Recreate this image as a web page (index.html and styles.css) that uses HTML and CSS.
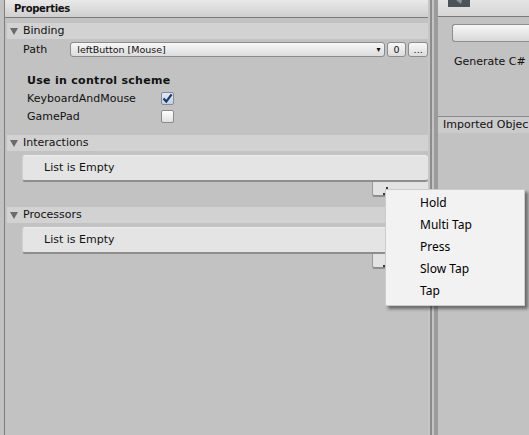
FILE: index.html
```html
<!DOCTYPE html>
<html>
<head>
<meta charset="utf-8">
<link rel="stylesheet" href="styles.css">
</head>
<body>
<div class="root">
  <div class="left">
    <div class="titlebar"><span class="title">Properties</span></div>
    <div class="section">
      <div class="sechead"><span class="tri"></span>Binding</div>
      <div class="pathrow">
        <span class="plabel">Path</span>
        <div class="dropdown"><span>leftButton [Mouse]</span><span class="arrow">&#9662;</span></div>
        <div class="smallbtn zero">0</div>
        <div class="smallbtn dots">...</div>
      </div>
      <div class="row bold">Use in control scheme</div>
      <div class="row"><span class="rlabel">KeyboardAndMouse</span>
        <span class="check on"><svg width="11" height="11" viewBox="0 0 11 11"><path d="M1.5 5.5 L4.3 8.6 L9.6 1.4" fill="none" stroke="#173a6e" stroke-width="2.2"/></svg></span>
      </div>
      <div class="row"><span class="rlabel">GamePad</span><span class="check"></span></div>
    </div>
    <div class="section sec2">
      <div class="sechead"><span class="tri"></span>Interactions</div>
      <div class="listbox">List is Empty</div>
      <div class="footer"><span class="plus"></span></div>
    </div>
    <div class="section sec3">
      <div class="sechead"><span class="tri"></span>Processors</div>
      <div class="listbox">List is Empty</div>
      <div class="footer"><span class="plus"></span></div>
    </div>
  </div>
  <div class="sep"><span class="s1"></span><span class="s2"></span><span class="s3"></span></div>
  <div class="right">
    <div class="rtop"><span class="icon"><svg width="22" height="7" viewBox="0 0 22 7"><path d="M8 0 L14 0 L13 4 Z" fill="#8b939a"/></svg></span></div>
    <div class="rbody">
      <div class="bigbtn"></div>
      <div class="gen">Generate C#</div>
    </div>
    <div class="imported">Imported Objec</div>
  </div>
</div>
<div class="menu">
  <div class="item">Hold</div>
  <div class="item">Multi Tap</div>
  <div class="item">Press</div>
  <div class="item">Slow Tap</div>
  <div class="item">Tap</div>
</div>
</body>
</html>
```
FILE: styles.css
```css
html, body {
  margin: 0;
  padding: 0;
  background: #c2c2c2;
  width: 529px;
  height: 435px;
  overflow: hidden;
  font-family: "DejaVu Sans", sans-serif;
  font-size: 11px;
  color: #111;
}
.root {
  display: flex;
  height: 435px;
}
.left {
  width: 423px;
  margin-left: 4px;
  border-left: 1px solid #7d7d7d;
  display: flex;
  flex-direction: column;
}
.titlebar {
  height: 17px;
  border-bottom: 1px solid #7a7a7a;
  background: linear-gradient(#e9e9e9, #cfcfcf);
  display: flex;
  align-items: center;
}
.title {
  font-weight: bold;
  font-size: 10px;
  margin-left: 9px;
  letter-spacing: -0.3px;
}
.section {
  margin-top: 5px;
  display: flex;
  flex-direction: column;
}
.sec2, .sec3 { margin-top: 10px; }
.sechead {
  height: 16px;
  margin-left: 2px;
  background: #d2d2d2;
  display: flex;
  align-items: center;
  line-height: 16px;
}
.tri {
  width: 0; height: 0;
  border-left: 4px solid transparent;
  border-right: 4px solid transparent;
  border-top: 7px solid #6b6b6b;
  margin: 0 5px 0 3px;
}
.pathrow {
  display: flex;
  align-items: center;
  height: 15px;
  margin-top: 3px;
}
.plabel {
  width: 48px;
  margin-left: 18px;
}
.dropdown {
  width: 311px;
  height: 13px;
  border: 1px solid #8c8c8c;
  border-radius: 3px;
  background: linear-gradient(#f7f7f7, #dcdcdc);
  font-size: 9.5px;
  display: flex;
  align-items: center;
  justify-content: space-between;
  padding-left: 6px;
  box-sizing: content-box;
}
.dropdown .arrow { font-size: 8px; margin-right: 3px; }
.smallbtn {
  height: 13px;
  border: 1px solid #8c8c8c;
  border-radius: 3px;
  background: linear-gradient(#f7f7f7, #dcdcdc);
  display: flex;
  align-items: center;
  justify-content: center;
  font-size: 9.5px;
  margin-left: 2px;
}
.zero { width: 18px; }
.dots { width: 18px; }
.row {
  height: 18px;
  display: flex;
  align-items: center;
  margin-left: 22px;
}
.row.bold {
  font-weight: bold;
  margin-top: 14px;
  letter-spacing: 0.3px;
}
.rlabel { width: 134px; }
.check {
  width: 11px;
  height: 11px;
  border: 1px solid #8a8a8a;
  border-radius: 2px;
  background: linear-gradient(#fdfdfd, #e2e2e2);
  display: flex;
  align-items: center;
  justify-content: center;
}
.check.on { background: linear-gradient(#dfe8f5, #c4d2e8); }
.listbox {
  margin-top: 4px;
  margin-left: 17px;
  height: 24px;
  border-top: 1px solid #ededed;
  border-left: 1px solid #cfcfcf;
  border-bottom: 2px solid #8e8e8e;
  border-radius: 3px;
  background: #e4e4e4;
  padding-left: 21px;
  line-height: 24px;
}
.footer {
  margin-left: 367px;
  height: 13px;
  background: #e3e3e3;
  border-left: 1px solid #9a9a9a;
  border-bottom: 2px solid #8e8e8e;
  border-radius: 0 0 3px 3px;
  position: relative;
}
.plus {
  position: absolute;
  left: 10px;
  top: 11px;
  width: 8px;
  height: 2px;
  background: #3a3a3a;
}
.plus::after {
  content: "";
  position: absolute;
  left: 3px;
  top: -6px;
  width: 2px;
  height: 10px;
  background: #3a3a3a;
}
.sep {
  display: flex;
  width: 10px;
}
.sep .s1 { width: 2px; background: #c6c6c6; }
.sep .s2 { width: 2px; background: #8c8c8c; }
.sep .s3 { width: 2px; background: #c4c4c4; }
.sep::after { content: ""; width: 4px; background: #9b9b9b; }
.right {
  flex: 1;
  display: flex;
  flex-direction: column;
}
.rtop {
  height: 16px;
  border-bottom: 1px solid #7a7a7a;
  background: linear-gradient(#e4e4e4, #d6d6d6);
}
.icon {
  display: block;
  width: 22px;
  height: 7px;
  margin-left: 10px;
  background: #4b5359;
}
.icon svg { display: block; }
.rbody {
  height: 99px;
  border-bottom: 1px solid #8a8a8a;
  padding-left: 14px;
}
.bigbtn {
  margin-top: 7px;
  height: 16px;
  width: 100px;
  border: 1px solid #8e8e8e;
  border-right: none;
  border-radius: 3px 0 0 3px;
  background: linear-gradient(#f6f6f6, #d9d9d9);
}
.gen {
  margin-top: 13px;
  margin-left: 2px;
  line-height: 14px;
  white-space: nowrap;
}
.imported {
  height: 16px;
  line-height: 16px;
  background: #cbcbcb;
  padding-left: 5px;
  white-space: nowrap;
  overflow: hidden;
}
.menu {
  position: absolute;
  left: 385px;
  top: 189px;
  width: 138px;
  height: 113px;
  background: #f2f2f2;
  border: 1px solid #cccccc;
  box-shadow: 3px 3px 3px rgba(0,0,0,0.45);
  font-family: "Noto Sans", sans-serif;
  font-size: 12px;
  color: #000;
  padding-top: 2px;
  box-sizing: content-box;
}
.item {
  height: 22px;
  line-height: 22px;
  padding-left: 34px;
}
```
